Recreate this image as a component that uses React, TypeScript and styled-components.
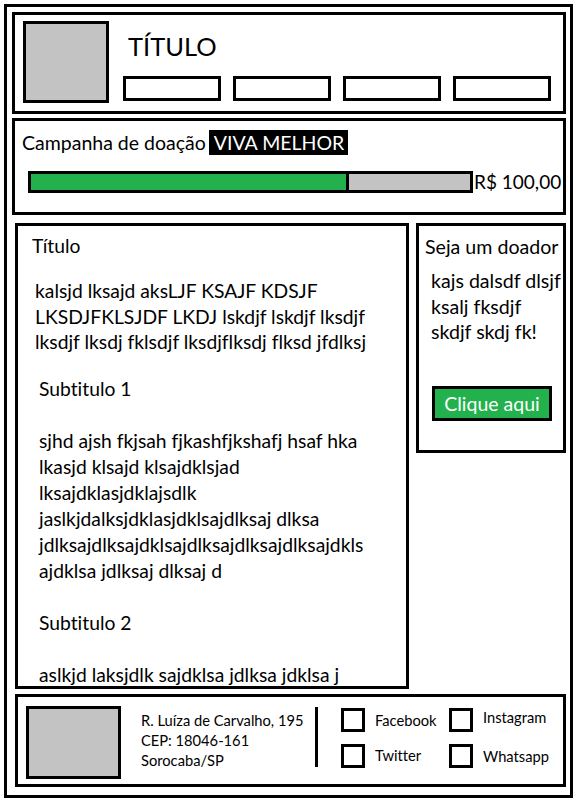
import React from "react";
import styled, { createGlobalStyle } from "styled-components";

const GlobalStyle = createGlobalStyle`
  html, body { margin: 0; padding: 0; background: #fff; }
  body {
    font-family: Lato, "Open Sans", sans-serif;
    color: #000;
    font-variant-ligatures: none;
    font-feature-settings: "liga" 0, "clig" 0;
  }
  * { box-sizing: border-box; }
`;

const Frame = styled.div`
  width: 569px;
  margin: 4px 4px 0 4px;
  border: 3px solid #000;
  padding: 5px 4px 8px 5px;
  display: flex;
  flex-direction: column;
`;

const Header = styled.header`
  height: 102px;
  border: 3px solid #000;
  display: flex;
  align-items: flex-start;
  gap: 14px;
  padding: 6px 0 0 8px;
`;

const LogoBox = styled.div<{ $w: number; $h: number }>`
  flex: none;
  width: ${(p) => p.$w}px;
  height: ${(p) => p.$h}px;
  border: 3px solid #000;
  background: #c3c3c3;
`;

const HeaderMain = styled.div`
  display: flex;
  flex-direction: column;
  padding-top: 12px;
`;

const SiteTitle = styled.h1`
  margin: 0 0 0 5px;
  font-size: 25.5px;
  font-weight: 400;
  line-height: 26px;
`;

const Nav = styled.nav`
  display: flex;
  gap: 12px;
  margin-top: 17px;
`;

const NavButton = styled.div`
  width: 98px;
  height: 25px;
  border: 3px solid #000;
  background: #fff;
`;

const Campaign = styled.section`
  margin-top: 4px;
  height: 97px;
  border: 3px solid #000;
  padding: 9px 0 0 7px;
  display: flex;
  flex-direction: column;
`;

const CampaignHead = styled.div`
  display: flex;
  align-items: center;
  font-size: 19.5px;
  height: 25px;
  white-space: nowrap;
`;

const Badge = styled.span`
  margin-left: 3px;
  height: 25px;
  padding: 0 4px 0 5px;
  background: #000;
  color: #fff;
  display: flex;
  align-items: center;
`;

const ProgressRow = styled.div`
  display: flex;
  align-items: center;
  margin-top: 16px;
  padding-left: 6px;
`;

const Bar = styled.div`
  flex: none;
  width: 445px;
  height: 22px;
  border: 3px solid #000;
  background: #c3c3c3;
  display: flex;
`;

const BarFill = styled.div`
  height: 100%;
  background: #22b14c;
  border-right: 3px solid #000;
`;

const Amount = styled.span`
  margin-left: 1px;
  font-size: 19px;
  line-height: 22px;
  white-space: nowrap;
`;

const MainRow = styled.div`
  display: flex;
  align-items: flex-start;
  gap: 7px;
  margin-top: 8px;
  padding-left: 3px;
`;

const Article = styled.article`
  flex: none;
  width: 394px;
  height: 466px;
  border: 3px solid #000;
  padding-top: 7px;
  overflow: hidden;
  font-size: 19.3px;
`;

const Line = styled.div<{ $indent: number; $gap?: number; $lh?: number }>`
  padding-left: ${(p) => p.$indent}px;
  margin-top: ${(p) => p.$gap ?? 0}px;
  line-height: ${(p) => p.$lh ?? 26}px;
  white-space: nowrap;
`;

const Aside = styled.aside`
  flex: none;
  width: 150px;
  height: 230px;
  border: 3px solid #000;
  padding: 8px 0 0 6px;
  font-size: 19.6px;
  overflow: hidden;
`;

const AsideTitle = styled.div`
  line-height: 26px;
  white-space: nowrap;
`;

const AsideText = styled.div`
  margin-top: 8px;
  padding-left: 6px;
  line-height: 25.5px;
  white-space: nowrap;
`;

const CtaButton = styled.button`
  margin: 41px 0 0 7px;
  width: 120px;
  height: 35px;
  border: 3px solid #000;
  background: #22b14c;
  color: #fff;
  font-family: inherit;
  font-size: 19.5px;
  padding: 0;
  display: flex;
  align-items: center;
  justify-content: center;
`;

const Footer = styled.footer`
  margin: 5px 0 0 3px;
  height: 93px;
  border: 3px solid #000;
  display: flex;
  align-items: flex-start;
  padding: 9px 0 0 8px;
`;

const Address = styled.address`
  flex: none;
  font-style: normal;
  width: 174px;
  margin: 4px 0 0 20px;
  font-size: 14.7px;
  line-height: 20px;
  white-space: nowrap;
`;

const Divider = styled.div`
  flex: none;
  width: 3px;
  height: 60px;
  margin-top: 1px;
  background: #000;
`;

const Social = styled.div`
  display: grid;
  grid-template-columns: 108px 108px;
  row-gap: 12px;
  margin: 2px 0 0 23px;
`;

const SocialItem = styled.div`
  display: flex;
  align-items: center;
  gap: 10px;
  height: 24px;
  font-size: 14.7px;
  white-space: nowrap;
`;

const CheckBox = styled.span`
  flex: none;
  width: 24px;
  height: 24px;
  border: 3px solid #000;
`;

const SocialLabel = styled.span<{ $lift?: number }>`
  position: relative;
  top: ${(p) => -(p.$lift ?? 0)}px;
`;

const progress = 0.725;

export default function App() {
  return (
    <>
      <GlobalStyle />
      <Frame>
        <Header>
          <LogoBox $w={86} $h={82} />
          <HeaderMain>
            <SiteTitle>TÍTULO</SiteTitle>
            <Nav>
              <NavButton />
              <NavButton />
              <NavButton />
              <NavButton />
            </Nav>
          </HeaderMain>
        </Header>

        <Campaign>
          <CampaignHead>
            Campanha de doação<Badge>VIVA MELHOR</Badge>
          </CampaignHead>
          <ProgressRow>
            <Bar>
              <BarFill style={{ width: `${progress * 100}%` }} />
            </Bar>
            <Amount>R$ 100,00</Amount>
          </ProgressRow>
        </Campaign>

        <MainRow>
          <Article>
            <Line $indent={14}>Título</Line>
            <Line $indent={17} $gap={19} $lh={25.5}>
              kalsjd lksajd aksLJF KSAJF KDSJF
              <br />
              LKSDJFKLSJDF LKDJ lskdjf lskdjf lksdjf
              <br />
              lksdjf lksdj fklsdjf lksdjflksdj flksd jfdlksj
            </Line>
            <Line $indent={21} $gap={21}>Subtitulo 1</Line>
            <Line $indent={21} $gap={26}>
              sjhd ajsh fkjsah fjkashfjkshafj hsaf hka
              <br />
              lkasjd klsajd klsajdklsjad
              <br />
              lksajdklasjdklajsdlk
              <br />
              jaslkjdalksjdklasjdklsajdlksaj dlksa
              <br />
              jdlksajdlksajdklsajdlksajdlksajdlksajdkls
              <br />
              ajdklsa jdlksaj dlksaj d
            </Line>
            <Line $indent={21} $gap={26}>Subtitulo 2</Line>
            <Line $indent={21} $gap={26}>aslkjd laksjdlk sajdklsa jdlksa jdklsa j</Line>
          </Article>

          <Aside>
            <AsideTitle>Seja um doador</AsideTitle>
            <AsideText>
              kajs dalsdf dlsjf
              <br />
              ksalj fksdjf
              <br />
              skdjf skdj fk!
            </AsideText>
            <CtaButton>Clique aqui</CtaButton>
          </Aside>
        </MainRow>

        <Footer>
          <LogoBox $w={95} $h={73} />
          <Address>
            R. Luíza de Carvalho, 195
            <br />
            CEP: 18046-161
            <br />
            Sorocaba/SP
          </Address>
          <Divider />
          <Social>
            <SocialItem>
              <CheckBox />
              <SocialLabel>Facebook</SocialLabel>
            </SocialItem>
            <SocialItem>
              <CheckBox />
              <SocialLabel $lift={3}>Instagram</SocialLabel>
            </SocialItem>
            <SocialItem>
              <CheckBox />
              <SocialLabel $lift={1}>Twitter</SocialLabel>
            </SocialItem>
            <SocialItem>
              <CheckBox />
              <SocialLabel>Whatsapp</SocialLabel>
            </SocialItem>
          </Social>
        </Footer>
      </Frame>
    </>
  );
}
